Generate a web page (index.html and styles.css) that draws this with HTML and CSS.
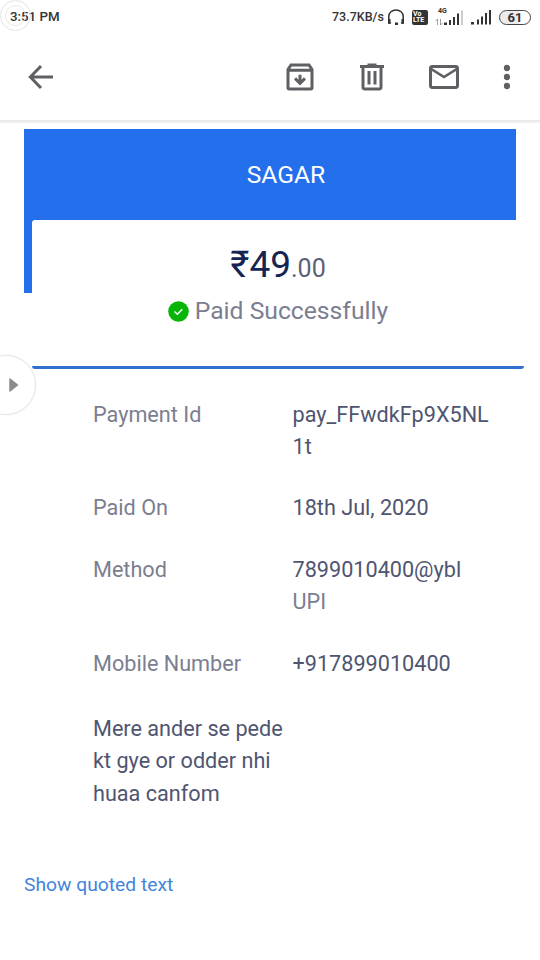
FILE: index.html
```html
<!DOCTYPE html>
<html lang="en">
<head>
<meta charset="utf-8">
<title>Payment receipt</title>
<link rel="stylesheet" href="styles.css">
</head>
<body>
<div class="status">
  <span class="clock">3:51 PM</span>
  <span class="ring"></span>
  <span class="speed">73.7KB/s</span>
  <svg class="headset" width="18" height="16" viewBox="0 0 18 16"><path d="M4 14H1.800V7.500C1.800 3.500 5 1 9 1s7.200 2.500 7.200 6.500V14H14" fill="none" stroke="#333" stroke-width="1.500"/><path d="M1 10h2.500v4.500H1zM14.500 10H17v4.500h-2.500zM8 13.500h3V16H8z" fill="#333"/></svg>
  <span class="volte"><span>Vo</span><span>LTE</span></span>
  <span class="network"><span class="gen">4G</span>
    <svg width="29" height="17" viewBox="0 0 29 17"><path d="M2.500 16V10L.5 12M5.500 10v6l2-2" fill="none" stroke="#888" stroke-width=".8"/><path d="M9 13.500h3V16H9zM14 11h2v5h-2zM18 8h2v8h-2zM22 4.500h2V16h-2z" fill="#333"/><path d="M26 1.500h2V16h-2z" fill="#ccc"/></svg>
  </span>
  <svg class="signal" width="21" height="16" viewBox="0 0 21 16"><path d="M0 13h3v2.500H0zM6 10.500h2v5H6zM10 7.500h2v8h-2zM14 4h2v11.500h-2zM18 1h2v14.500h-2z" fill="#333"/></svg>
  <span class="battery">61</span>
</div>
<header class="toolbar">
  <svg class="icon" viewBox="0 0 24 24"><path d="M20 12H5M12 4.700 4.900 12l7.100 7.300" fill="none" stroke="#5f6063" stroke-width="2"/></svg>
  <div class="actions">
    <svg class="icon" viewBox="0 0 24 24"><path d="M4 7v12.200q0 .8.8.8h14.400q.8 0 .8-.8V7l-2-3H6zM4 7.500h16" fill="none" stroke="#5f6063" stroke-width="2"/><path d="M11 10.500h2v3.300l1.600-1.600L16 13.600l-4 4-4-4 1.400-1.400 1.600 1.600z" fill="#5f6063"/></svg>
    <svg class="icon" viewBox="0 0 24 24"><path d="M15 4V3H9v1H4v2h1v13c0 1.100.9 2 2 2h10c1.100 0 2-.9 2-2V6h1V4zm2 15H7V6h10zM9 8h2v9H9zm4 0h2v9h-2z" fill="#5f6063"/></svg>
    <svg class="icon" viewBox="0 0 24 24"><path d="M22 6c0-1.100-.9-2-2-2H4c-1.100 0-2 .9-2 2v12c0 1.100.9 2 2 2h16c1.100 0 2-.9 2-2zm-2 0-8 5-8-5zm0 12H4V8l8 5 8-5z" fill="#5f6063"/></svg>
    <svg class="icon more" viewBox="0 0 24 24"><g fill="#5f6063"><circle cx="12" cy="6" r="2.100"/><circle cx="12" cy="12" r="2.100"/><circle cx="12" cy="18" r="2.100"/></g></svg>
  </div>
</header>
<main class="mail">
  <section class="banner">
    <h1 class="merchant">SAGAR</h1>
    <div class="card">
      <div class="amount"><span class="whole">₹49</span><span class="cents">.00</span></div>
      <div class="paid"><svg width="21" height="21" viewBox="0 0 21 21"><circle cx="10.500" cy="10.500" r="10.300" fill="#06b506"/><path d="m6.500 10.500 2.800 2.800 5-5" fill="none" stroke="#fff" stroke-width="1.500"/></svg><span>Paid Successfully</span></div>
    </div>
  </section>
  <dl class="details">
    <div class="row"><dt>Payment Id</dt><dd>pay_FFwdkFp9X5NL<br>1t</dd></div>
    <div class="row"><dt>Paid On</dt><dd>18th Jul, 2020</dd></div>
    <div class="row"><dt>Method</dt><dd>7899010400@ybl<br><span class="muted">UPI</span></dd></div>
    <div class="row"><dt>Mobile Number</dt><dd>+917899010400</dd></div>
  </dl>
  <p class="note">Mere ander se pede<br>kt gye or odder nhi<br>huaa canfom</p>
  <a class="quoted">Show quoted text</a>
</main>
<div class="handle"><svg width="10" height="14" viewBox="0 0 10 14"><path d="M1 1v12l7.500-6z" fill="#8c8c8c" stroke="#8c8c8c" stroke-width="1.500" stroke-linejoin="round"/></svg></div>
</body>
</html>
```
FILE: styles.css
```css
* { box-sizing: border-box; }
body {
  margin: 0;
  height: 960px;
  overflow: hidden;
  position: relative;
  background: #fff;
  color: #4f5570;
  font-family: Roboto, "Noto Sans", sans-serif;
}
svg { display: block; flex: none; }

.status {
  height: 34px;
  display: flex;
  align-items: center;
  padding: 0 9px 0 10px;
  color: #333;
  position: relative;
}
.ring {
  position: absolute;
  left: 0;
  top: 0;
  width: 31px;
  height: 31px;
  border: 1px solid #e4e4e4;
  border-radius: 50%;
}
.ring::after {
  content: "";
  position: absolute;
  inset: 4px;
  border: 1px solid #e8e8e8;
  border-radius: 50%;
}
.clock {
  width: 60px;
  font: 500 13.3px/16px Roboto, sans-serif;
}
.speed {
  width: 52px;
  margin-left: auto;
  font: 500 12.5px/16px Roboto, sans-serif;
  white-space: nowrap;
}
.headset { margin-left: 3px; }
.volte {
  width: 16px;
  height: 15px;
  margin-left: 7px;
  border-radius: 2px;
  background: #333;
  color: #fff;
  display: flex;
  flex-direction: column;
  padding: 1px 1px 0;
  font: 700 7px/6.5px Roboto, sans-serif;
}
.network { position: relative; margin-left: 7px; }
.gen {
  position: absolute;
  left: 3px;
  top: -1px;
  font: 700 7px/7px Roboto, sans-serif;
}
.signal { margin-left: 7px; }
.battery {
  width: 32px;
  height: 15px;
  margin-left: 7px;
  border: 1.5px solid #444;
  border-radius: 8px;
  background: linear-gradient(90deg, #ececec 65%, #fff 65%);
  font: 700 13px/13px Roboto, sans-serif;
  text-align: center;
}

.toolbar {
  height: 88px;
  display: flex;
  justify-content: space-between;
  align-items: center;
  padding: 0 15px 0 23px;
  border-bottom: 2px solid #ebebec;
  box-shadow: 0 1px 1px #f4f4f4;
}
.actions { display: flex; gap: 36px; }
.icon { width: 36px; height: 36px; }
.more { margin-left: -9px; }

.mail { padding: 7px 24px 0; }
.banner {
  height: 164px;
  padding-left: 8px;
  background: #2470ec;
}
.merchant {
  margin: 0;
  height: 91px;
  padding-left: 24px;
  color: #fff;
  font-size: 24.6px;
  font-weight: 400;
  line-height: 91px;
  text-align: center;
}
.card {
  height: 149px;
  margin-right: -8px;
  padding-top: 20px;
  background: #fff;
  border-bottom: 3px solid #3070d0;
  border-radius: 3px;
}
.amount {
  display: flex;
  justify-content: center;
  align-items: baseline;
  line-height: 50px;
  color: #162453;
}
.whole { font-size: 37px; }
.cents { font-size: 25px; color: #5b6177; }
.paid {
  display: flex;
  justify-content: center;
  align-items: center;
  gap: 6px;
  font-size: 24.7px;
  line-height: 34px;
  color: #7b7e90;
}
.details {
  display: flex;
  flex-direction: column;
  gap: 29px;
  margin: 105.6px 0 0 69px;
  font-size: 21.65px;
  line-height: 32.4px;
}
.row { display: flex; }
dt { width: 199.5px; color: #7b7e90; }
dd { margin: 0; white-space: nowrap; }
.muted { color: #7b7e90; }
.note {
  margin: 33px 0 0 69px;
  font-size: 21.65px;
  line-height: 32.4px;
}
.quoted {
  display: block;
  margin-top: 62.4px;
  color: #4484dc;
  font-size: 19.25px;
  line-height: 24px;
}
.handle {
  position: absolute;
  left: -24px;
  top: 355px;
  width: 60px;
  height: 60px;
  border: 1px solid #e6e6e6;
  border-radius: 50%;
  background: #fff;
  box-shadow: 0 0 2px #eee;
  display: flex;
  align-items: center;
  padding-left: 32px;
}
```
